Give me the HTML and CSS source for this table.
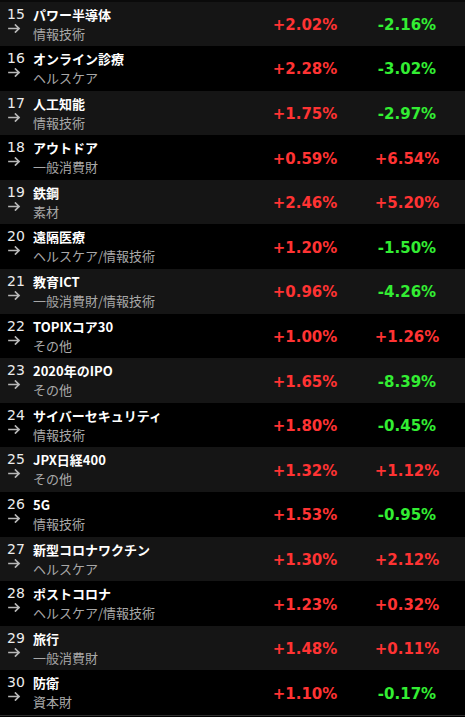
FILE: index.html
```html
<!DOCTYPE html>
<html lang="ja">
<head>
<meta charset="utf-8">
<link rel="stylesheet" href="styles.css">
</head>
<body>
<div class="list">
  <div class="row alt"><div class="left"><span class="num">15</span><span class="title">パワー半導体</span><svg class="arrow" width="13" height="9" viewBox="0 0 13 9"><path d="M1 4.5h10M7.5 1l3.5 3.5-3.5 3.5"/></svg><span class="cat">情報技術</span></div><div class="pct up">+2.02%</div><div class="pct down">-2.16%</div></div>
  <div class="row"><div class="left"><span class="num">16</span><span class="title">オンライン診療</span><svg class="arrow" width="13" height="9" viewBox="0 0 13 9"><path d="M1 4.5h10M7.5 1l3.5 3.5-3.5 3.5"/></svg><span class="cat">ヘルスケア</span></div><div class="pct up">+2.28%</div><div class="pct down">-3.02%</div></div>
  <div class="row alt"><div class="left"><span class="num">17</span><span class="title">人工知能</span><svg class="arrow" width="13" height="9" viewBox="0 0 13 9"><path d="M1 4.5h10M7.5 1l3.5 3.5-3.5 3.5"/></svg><span class="cat">情報技術</span></div><div class="pct up">+1.75%</div><div class="pct down">-2.97%</div></div>
  <div class="row"><div class="left"><span class="num">18</span><span class="title">アウトドア</span><svg class="arrow" width="13" height="9" viewBox="0 0 13 9"><path d="M1 4.5h10M7.5 1l3.5 3.5-3.5 3.5"/></svg><span class="cat">一般消費財</span></div><div class="pct up">+0.59%</div><div class="pct up">+6.54%</div></div>
  <div class="row alt"><div class="left"><span class="num">19</span><span class="title">鉄鋼</span><svg class="arrow" width="13" height="9" viewBox="0 0 13 9"><path d="M1 4.5h10M7.5 1l3.5 3.5-3.5 3.5"/></svg><span class="cat">素材</span></div><div class="pct up">+2.46%</div><div class="pct up">+5.20%</div></div>
  <div class="row"><div class="left"><span class="num">20</span><span class="title">遠隔医療</span><svg class="arrow" width="13" height="9" viewBox="0 0 13 9"><path d="M1 4.5h10M7.5 1l3.5 3.5-3.5 3.5"/></svg><span class="cat">ヘルスケア/情報技術</span></div><div class="pct up">+1.20%</div><div class="pct down">-1.50%</div></div>
  <div class="row alt"><div class="left"><span class="num">21</span><span class="title">教育ICT</span><svg class="arrow" width="13" height="9" viewBox="0 0 13 9"><path d="M1 4.5h10M7.5 1l3.5 3.5-3.5 3.5"/></svg><span class="cat">一般消費財/情報技術</span></div><div class="pct up">+0.96%</div><div class="pct down">-4.26%</div></div>
  <div class="row"><div class="left"><span class="num">22</span><span class="title">TOPIXコア30</span><svg class="arrow" width="13" height="9" viewBox="0 0 13 9"><path d="M1 4.5h10M7.5 1l3.5 3.5-3.5 3.5"/></svg><span class="cat">その他</span></div><div class="pct up">+1.00%</div><div class="pct up">+1.26%</div></div>
  <div class="row alt"><div class="left"><span class="num">23</span><span class="title">2020年のIPO</span><svg class="arrow" width="13" height="9" viewBox="0 0 13 9"><path d="M1 4.5h10M7.5 1l3.5 3.5-3.5 3.5"/></svg><span class="cat">その他</span></div><div class="pct up">+1.65%</div><div class="pct down">-8.39%</div></div>
  <div class="row"><div class="left"><span class="num">24</span><span class="title">サイバーセキュリティ</span><svg class="arrow" width="13" height="9" viewBox="0 0 13 9"><path d="M1 4.5h10M7.5 1l3.5 3.5-3.5 3.5"/></svg><span class="cat">情報技術</span></div><div class="pct up">+1.80%</div><div class="pct down">-0.45%</div></div>
  <div class="row alt"><div class="left"><span class="num">25</span><span class="title">JPX日経400</span><svg class="arrow" width="13" height="9" viewBox="0 0 13 9"><path d="M1 4.5h10M7.5 1l3.5 3.5-3.5 3.5"/></svg><span class="cat">その他</span></div><div class="pct up">+1.32%</div><div class="pct up">+1.12%</div></div>
  <div class="row"><div class="left"><span class="num">26</span><span class="title">5G</span><svg class="arrow" width="13" height="9" viewBox="0 0 13 9"><path d="M1 4.5h10M7.5 1l3.5 3.5-3.5 3.5"/></svg><span class="cat">情報技術</span></div><div class="pct up">+1.53%</div><div class="pct down">-0.95%</div></div>
  <div class="row alt"><div class="left"><span class="num">27</span><span class="title">新型コロナワクチン</span><svg class="arrow" width="13" height="9" viewBox="0 0 13 9"><path d="M1 4.5h10M7.5 1l3.5 3.5-3.5 3.5"/></svg><span class="cat">ヘルスケア</span></div><div class="pct up">+1.30%</div><div class="pct up">+2.12%</div></div>
  <div class="row"><div class="left"><span class="num">28</span><span class="title">ポストコロナ</span><svg class="arrow" width="13" height="9" viewBox="0 0 13 9"><path d="M1 4.5h10M7.5 1l3.5 3.5-3.5 3.5"/></svg><span class="cat">ヘルスケア/情報技術</span></div><div class="pct up">+1.23%</div><div class="pct up">+0.32%</div></div>
  <div class="row alt"><div class="left"><span class="num">29</span><span class="title">旅行</span><svg class="arrow" width="13" height="9" viewBox="0 0 13 9"><path d="M1 4.5h10M7.5 1l3.5 3.5-3.5 3.5"/></svg><span class="cat">一般消費財</span></div><div class="pct up">+1.48%</div><div class="pct up">+0.11%</div></div>
  <div class="row"><div class="left"><span class="num">30</span><span class="title">防衛</span><svg class="arrow" width="13" height="9" viewBox="0 0 13 9"><path d="M1 4.5h10M7.5 1l3.5 3.5-3.5 3.5"/></svg><span class="cat">資本財</span></div><div class="pct up">+1.10%</div><div class="pct down">-0.17%</div></div>
</div>
</body>
</html>
```

FILE: styles.css
```css
html, body {
  margin: 0;
  padding: 0;
  background: #000;
}
.list {
  padding-top: 1.5px;
  background: #0a0a0a;
  border-bottom: 1px solid #2e2e2e;
}
.row {
  display: grid;
  grid-template-columns: 1fr 100px 104px;
  align-items: center;
  height: 44.6px;
  background: #000;
  padding-right: 6px;
}
.row.alt {
  background: #151515;
}
.left {
  display: grid;
  grid-template-columns: 26px auto;
  grid-template-rows: 19px 19px;
  align-items: center;
  padding-left: 7px;
  align-self: start;
  padding-top: 3px;
}
.num {
  font-family: "DejaVu Sans", sans-serif;
  font-size: 14px;
  color: #ececec;
  line-height: 19px;
}
.title {
  font-family: "Noto Sans CJK JP", sans-serif;
  font-weight: 700;
  font-size: 13px;
  color: #fff;
  line-height: 19px;
}
.arrow {
  display: block;
  align-self: start;
  margin-left: 1px;
  fill: none;
  stroke: #b8b8b8;
  stroke-width: 1.7;
  stroke-linecap: square;
}
.cat {
  font-family: "Noto Sans CJK JP", sans-serif;
  font-size: 13px;
  color: #a8a8a8;
  line-height: 19px;
}
.pct {
  font-family: "DejaVu Sans", sans-serif;
  font-weight: 700;
  font-size: 15px;
  text-align: center;
  padding-top: 2px;
}
.up {
  color: #ff3333;
}
.down {
  color: #33ee33;
}
```
